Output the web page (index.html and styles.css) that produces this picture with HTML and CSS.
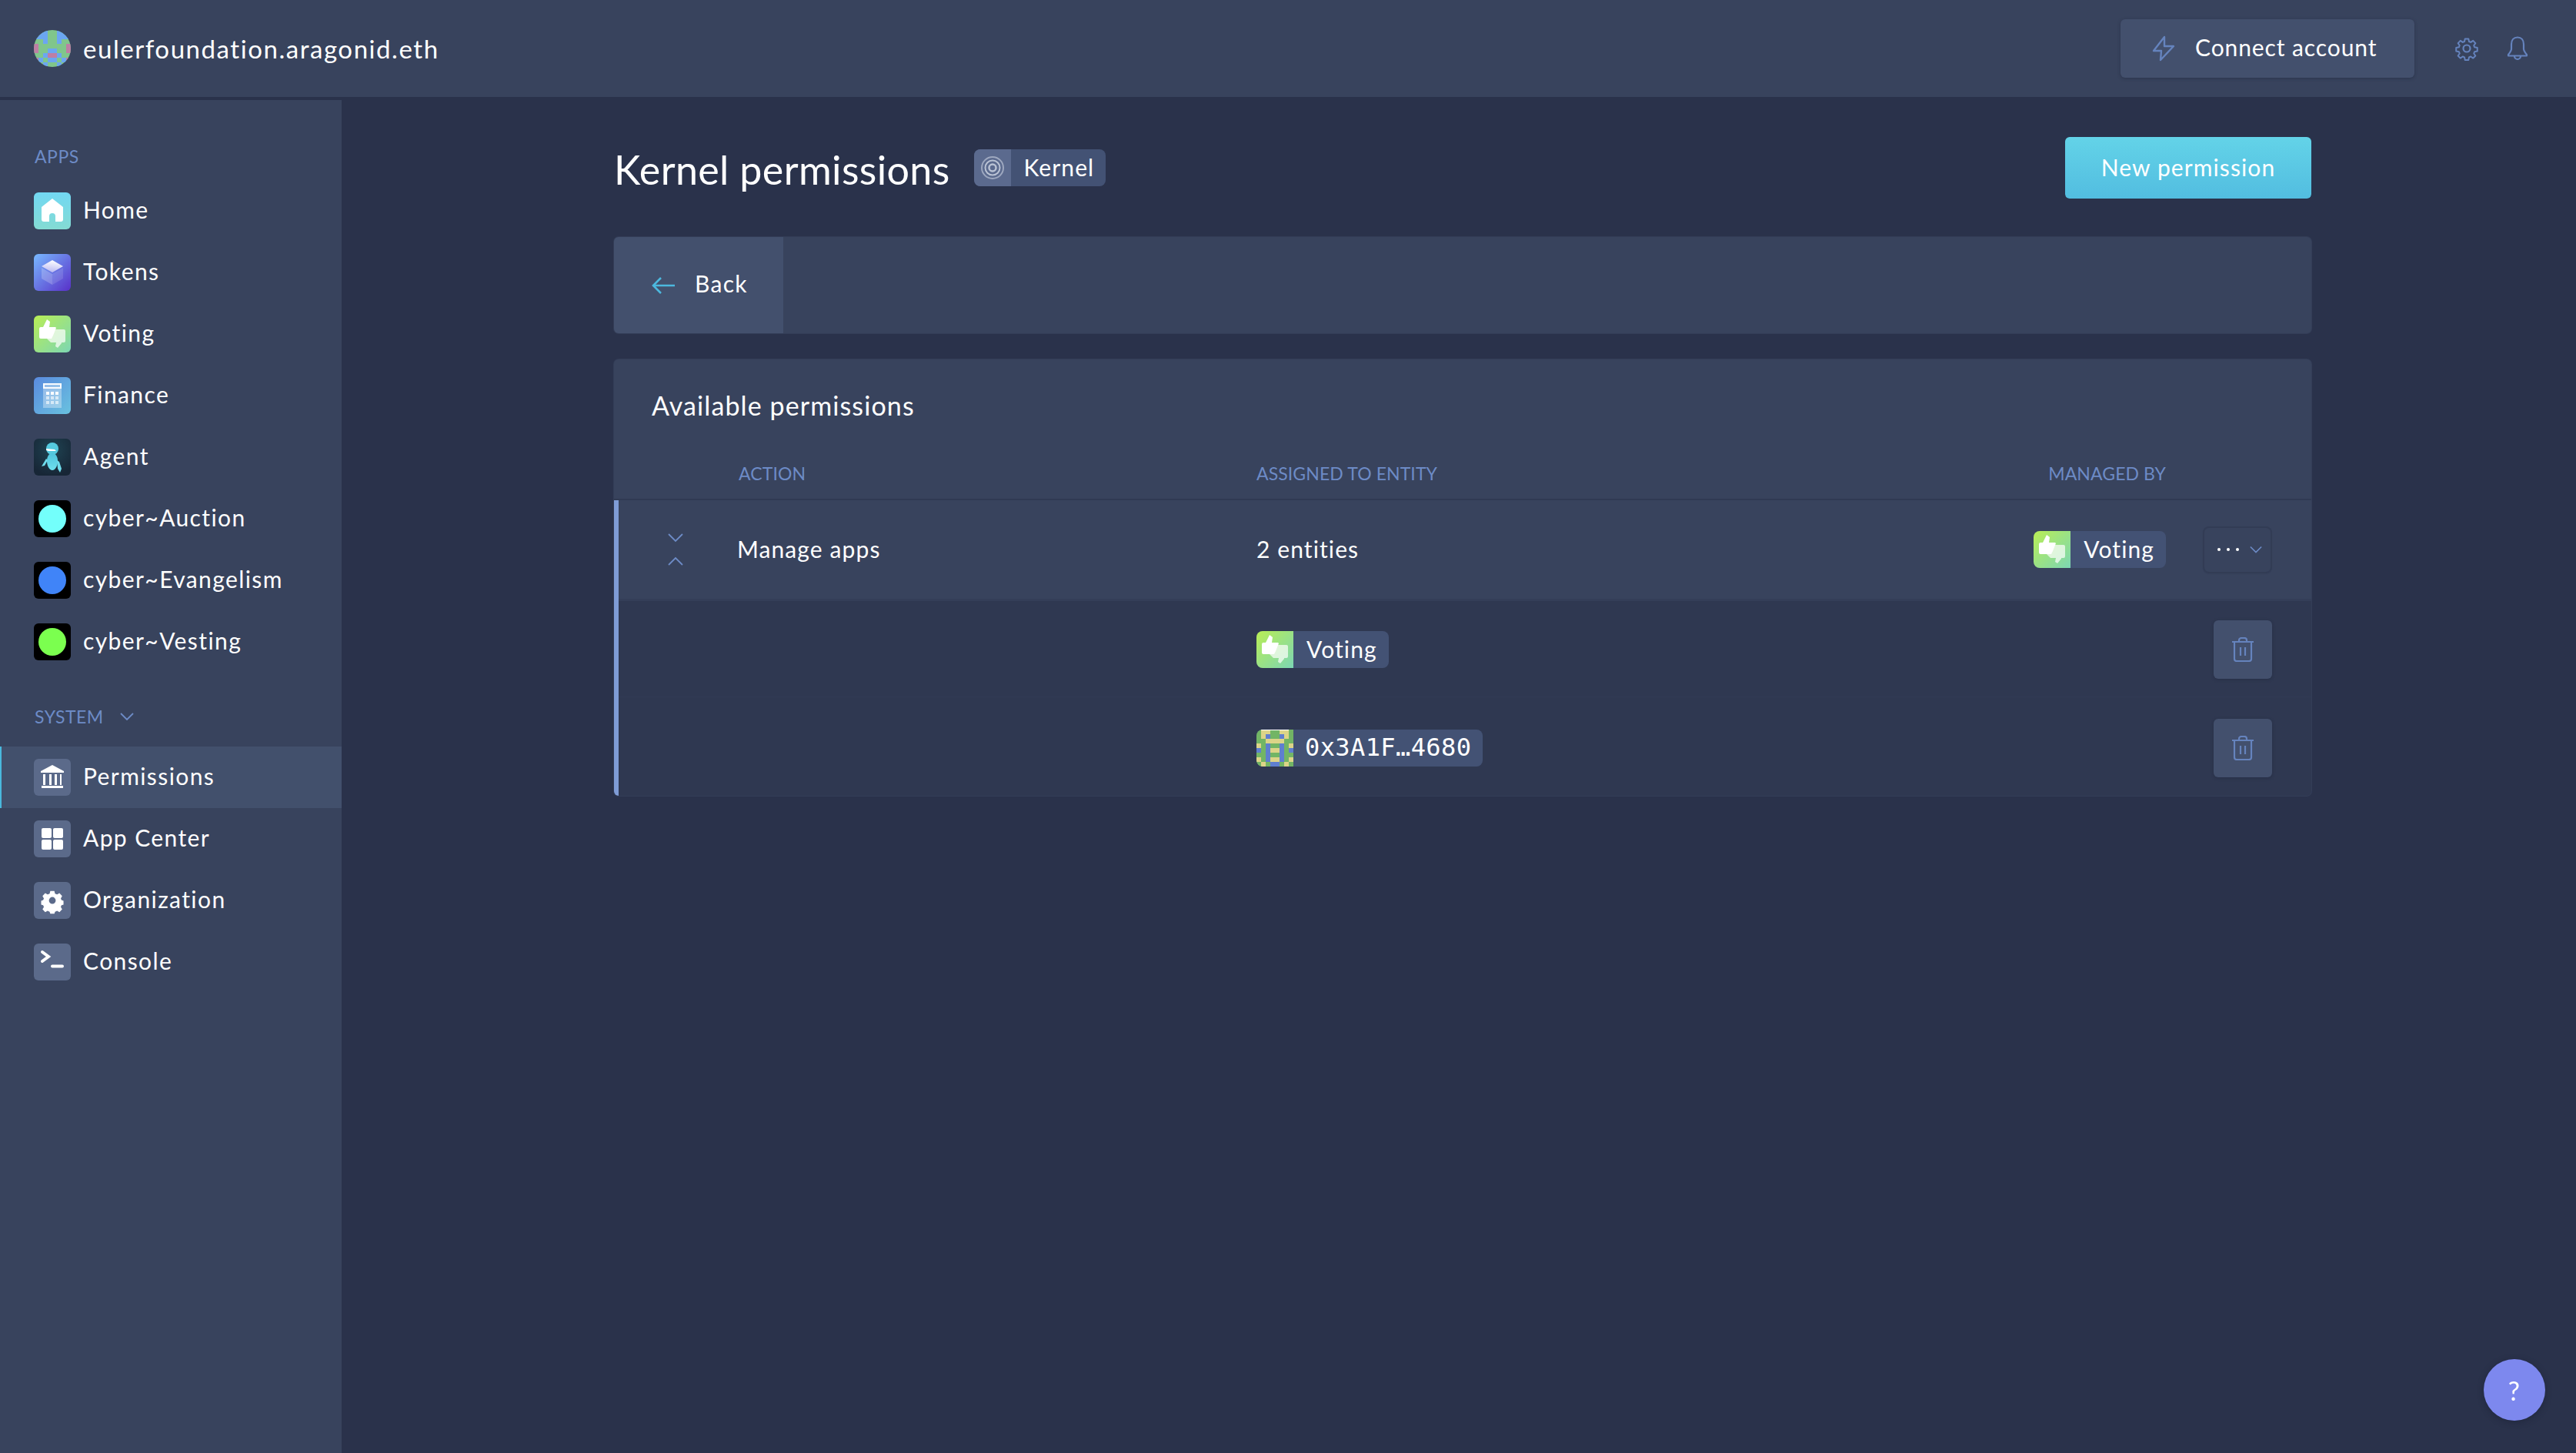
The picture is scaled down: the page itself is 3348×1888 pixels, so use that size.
FILE: index.html
```html
<!DOCTYPE html>
<html lang="en">
<head>
<meta charset="utf-8">
<title>Kernel permissions</title>
<link rel="stylesheet" href="styles.css">
</head>
<body>
<svg class="defs" width="0" height="0" aria-hidden="true">
  <defs>
    <linearGradient id="gHome" x1="0" y1="0" x2="0" y2="1"><stop offset="0" stop-color="#72d8f3"/><stop offset="1" stop-color="#84dbd3"/></linearGradient>
    <linearGradient id="gTok" x1="0" y1="0" x2="1" y2="1"><stop offset="0" stop-color="#78b9ff"/><stop offset="1" stop-color="#5830c8"/></linearGradient>
    <linearGradient id="gCube" x1="0.6" y1="0" x2="0.4" y2="1"><stop offset="0" stop-color="#fff"/><stop offset="1" stop-color="#b9b8f2"/></linearGradient>
    <linearGradient id="gVote" x1="0" y1="0" x2="1" y2="1"><stop offset="0" stop-color="#b9ee55"/><stop offset="1" stop-color="#7cd6b4"/></linearGradient>
    <linearGradient id="gFin" x1="0" y1="0" x2="1" y2="1"><stop offset="0" stop-color="#5a8ade"/><stop offset="1" stop-color="#69c2df"/></linearGradient>
    <radialGradient id="gAgent" cx="0.5" cy="0.3" r="0.7"><stop offset="0" stop-color="#1f4352"/><stop offset="1" stop-color="#172636"/></radialGradient>
    <linearGradient id="gBot" x1="0" y1="0" x2="0" y2="1"><stop offset="0" stop-color="#4fc3dc"/><stop offset="1" stop-color="#6fe0ee"/></linearGradient>
    <symbol id="voting" viewBox="0 0 48 48">
      <rect width="48" height="48" fill="url(#gVote)"/>
      <path fill="#fff" fill-opacity=".7" d="M22 18h17a2 2 0 0 1 2 2v13a2 2 0 0 1-2 2h-3v1l-5 6-3-2 1-5h-7l-5-5z"/>
      <path fill="#fff" d="M17 5l4 3-1 7h8l1 1-4 10-2 4H9a2 2 0 0 1-2-2V17a2 2 0 0 1 2-2h3z"/>
    </symbol>
  </defs>
</svg>

<header class="topbar">
  <div class="org">
    <svg class="org-logo" viewBox="0 0 8 8" shape-rendering="crispEdges">
      <rect width="8" height="8" fill="#80c68b"/>
      <path fill="#6ba6f1" d="M0 0h3v2H0zM5 0h3v2H5zM2 2h1v1H2zM5 2h1v1H5zM3 4h2v1H3zM2 5h1v1H2zM5 5h1v1H5zM3 6h2v1H3zM1 6h1v1H1zM6 6h1v1H6zM2 7h1v1H2zM5 7h1v1H5z"/>
      <path fill="#bd7fa4" d="M0 3h1v2H0zM7 3h1v2H7zM3 5h2v1H3zM0 6h1v1H0zM7 6h1v1H7z"/>
    </svg>
    <span class="org-name">eulerfoundation.aragonid.eth</span>
  </div>
  <div class="top-actions">
    <button class="connect">
      <svg class="connect-icon" viewBox="0 0 30 34" fill="none" stroke="#6583bd" stroke-width="2.4" stroke-linejoin="round"><path d="M16 2 2 20h10l-1 12L28 14H16z"/></svg>
      <span>Connect account</span>
    </button>
    <svg class="top-icon gear-icon" viewBox="0 0 32 32" fill="none" stroke="#6583bd" stroke-width="2.2" stroke-linejoin="round"><circle cx="16" cy="16" r="4.5"/><path d="M13.5 2h5l.8 4 2.5 1 3.4-2.3 3.4 3.6-2.3 3.3 1 2.5 4 .8v5l-4 .8-1 2.5 2.3 3.4-3.4 3.4-3.4-2.3-2.5 1-.8 4h-5l-.8-4-2.5-1-3.4 2.3-3.4-3.4 2.3-3.4-1-2.5-4-.8v-5l4-.8 1-2.5-2.3-3.3 3.4-3.6 3.4 2.3 2.5-1z" transform="translate(1.6 1.6) scale(.9)"/></svg>
    <svg class="top-icon bell-icon" viewBox="0 0 28 32" fill="none" stroke="#6583bd" stroke-width="2.2" stroke-linejoin="round"><path d="M14 1.5c-5 0-8 3.600-8 9v6c0 2.500-1.500 4.500-4 7.500v1.500h24V24c-2.500-3-4-5-4-7.500v-6c0-5.400-3-9-8-9z"/><path d="M10 26a4 4 0 0 0 8 0"/></svg>
  </div>
</header>

<div class="body">
  <nav class="sidebar">
    <div class="nav-label">APPS</div>
    <a class="nav-item">
      <svg class="nav-icon" viewBox="0 0 48 48"><rect width="48" height="48" rx="6" fill="url(#gHome)"/><path fill="#fff" d="M24 8l14 11v16a3 3 0 0 1-3 3h-7v-7a4 4 0 0 0-8 0v7h-7a3 3 0 0 1-3-3V19z"/></svg>
      <span>Home</span>
    </a>
    <a class="nav-item">
      <svg class="nav-icon" viewBox="0 0 48 48"><rect width="48" height="48" rx="6" fill="url(#gTok)"/><path fill="#fff" fill-opacity=".22" d="M10 18l14 8v14l-14-8z"/><path fill="#fff" fill-opacity=".12" d="M38 18l-14 8v14l14-8z"/><path fill="url(#gCube)" d="M24 8l14 8-14 8-14-8z"/></svg>
      <span>Tokens</span>
    </a>
    <a class="nav-item">
      <svg class="nav-icon nav-clip" viewBox="0 0 48 48"><use href="#voting"/></svg>
      <span>Voting</span>
    </a>
    <a class="nav-item">
      <svg class="nav-icon" viewBox="0 0 48 48"><rect width="48" height="48" rx="6" fill="url(#gFin)"/><rect x="12" y="8" width="24" height="32" fill="#fff" fill-opacity=".35"/><path fill="#fff" d="M12 8h24v7H12zM14 10v3h20v-3zM16 19h4v4h-4zM22 19h4v4h-4zM28 19h4v4h-4z" fill-rule="evenodd" fill-opacity=".95"/><path fill="#fff" fill-opacity=".6" d="M16 25h4v4h-4zM22 25h4v4h-4zM28 25h4v4h-4zM16 31h4v4h-4zM22 31h4v4h-4zM28 31h4v4h-4z"/></svg>
      <span>Finance</span>
    </a>
    <a class="nav-item">
      <svg class="nav-icon" viewBox="0 0 48 48"><rect width="48" height="48" rx="6" fill="url(#gAgent)"/><circle cx="24" cy="13" r="8" fill="#55c9de"/><path fill="#fff" d="M16 13l11 1 2 2-10 0-3-1z"/><path fill="url(#gBot)" d="M24 19c5 0 7 5 7 10 0 6-3 12-7 12s-7-6-7-12c0-5 2-10 7-10z"/><path fill="#6fdcec" d="M16 26l2 2-4 7-4 1zM30 28l3 2 3 9-2 5-3-5z"/></svg>
      <span>Agent</span>
    </a>
    <a class="nav-item">
      <svg class="nav-icon" viewBox="0 0 48 48"><rect width="48" height="48" rx="6" fill="#000"/><circle cx="24" cy="24" r="18" fill="#73fffb"/></svg>
      <span>cyber~Auction</span>
    </a>
    <a class="nav-item">
      <svg class="nav-icon" viewBox="0 0 48 48"><rect width="48" height="48" rx="6" fill="#000"/><circle cx="24" cy="24" r="18" fill="#4084f8"/></svg>
      <span>cyber~Evangelism</span>
    </a>
    <a class="nav-item">
      <svg class="nav-icon" viewBox="0 0 48 48"><rect width="48" height="48" rx="6" fill="#000"/><circle cx="24" cy="24" r="18" fill="#7bff4f"/></svg>
      <span>cyber~Vesting</span>
    </a>

    <div class="nav-label nav-label-system">
      SYSTEM
      <svg class="nav-chevron" viewBox="0 0 18 10" fill="none" stroke="#6d8bc6" stroke-width="1.800"><path d="M1 1l8 8 8-8"/></svg>
    </div>
    <a class="nav-item is-active">
      <svg class="nav-icon" viewBox="0 0 48 48"><rect width="48" height="48" rx="6" fill="#5b6a8a"/><path fill="#fff" d="M24 8l15 8v2H9v-2zM12 20h3v14h-3zM20 20h3v14h-3zM27 20h3v14h-3zM34 20h2v14h-2zM10 35h28v3H10z"/></svg>
      <span>Permissions</span>
    </a>
    <a class="nav-item">
      <svg class="nav-icon" viewBox="0 0 48 48"><rect width="48" height="48" rx="6" fill="#5b6a8a"/><rect x="10" y="10" width="13" height="13" rx="2" fill="#fff"/><rect x="25" y="10" width="13" height="13" rx="2" fill="#fff"/><rect x="10" y="25" width="13" height="13" rx="2" fill="#fff"/><rect x="25" y="25" width="13" height="13" rx="2" fill="#fff"/></svg>
      <span>App Center</span>
    </a>
    <a class="nav-item">
      <svg class="nav-icon" viewBox="0 0 48 48"><rect width="48" height="48" rx="6" fill="#5b6a8a"/><path fill="#fff" fill-rule="evenodd" d="M21 10h6l1 4 3 1.300 3.500-2 4 4.200-2 3.500 1 2.500 3 1v5.600l-3 1-1 2.500 2 3.500-4 4.200-3.500-2-3 1.300-1 3h-6l-1-3-3-1.300-3.500 2-4-4.200 2-3.500-1-2.500-3-1v-5.600l3-1 1-2.500-2-3.500 4-4.200 3.500 2 3-1.300zM24 19a5 5 0 1 0 0 10 5 5 0 0 0 0-10z" transform="translate(2.900 2.900) scale(.88)"/></svg>
      <span>Organization</span>
    </a>
    <a class="nav-item">
      <svg class="nav-icon" viewBox="0 0 48 48"><rect width="48" height="48" rx="6" fill="#5b6a8a"/><path fill="none" stroke="#fff" stroke-width="4" stroke-linecap="round" d="M11 11l8 6-8 6"/><path fill="none" stroke="#fff" stroke-width="4" stroke-linecap="round" d="M24 29.500h13"/></svg>
      <span>Console</span>
    </a>
  </nav>

  <main class="main">
    <div class="page-head">
      <div class="page-title">
        <h1>Kernel permissions</h1>
        <span class="tag">
          <svg class="tag-icon" viewBox="0 0 48 48"><rect width="48" height="48" fill="#5b6a8e"/><g fill="none" stroke="#b9c2d4"><circle cx="24" cy="24" r="14" stroke-width="2" stroke-opacity=".7"/><circle cx="24" cy="24" r="9.500" stroke-width="2"/><circle cx="24" cy="24" r="4.500" stroke-width="2.500"/></g></svg>
          <span class="tag-text">Kernel</span>
        </span>
      </div>
      <button class="primary"><span>New permission</span></button>
    </div>

    <div class="backbar">
      <button class="back">
        <svg class="back-arrow" viewBox="0 0 30 24" fill="none" stroke="#4cb8de" stroke-width="2.600"><path d="M12 2 2 12l10 10M2 12h28"/></svg>
        <span>Back</span>
      </button>
    </div>

    <section class="card">
      <h2 class="card-title">Available permissions</h2>
      <div class="grid th">
        <span></span>
        <span>ACTION</span>
        <span>ASSIGNED TO ENTITY</span>
        <span class="end">MANAGED BY</span>
        <span></span>
      </div>
      <div class="rows">
        <div class="grid row">
          <svg class="toggle" viewBox="0 0 20 42" fill="none" stroke="#6d8bc6" stroke-width="1.800"><path d="M1 1l9 9 9-9M1 41l9-9 9 9"/></svg>
          <span class="cell">Manage apps</span>
          <span class="cell">2 entities</span>
          <span class="end">
            <span class="tag">
              <svg class="tag-icon" viewBox="0 0 48 48"><use href="#voting"/></svg>
              <span class="tag-text">Voting</span>
            </span>
          </span>
          <span class="end">
            <button class="more">
              <svg class="more-dots" viewBox="0 0 28 4" fill="#fff"><circle cx="2" cy="2" r="2"/><circle cx="14" cy="2" r="2"/><circle cx="26" cy="2" r="2"/></svg>
              <svg class="more-chev" viewBox="0 0 18 10" fill="none" stroke="#6d8bc6" stroke-width="1.800"><path d="M1 1l8 8 8-8"/></svg>
            </button>
          </span>
        </div>
        <div class="grid sub sub-first">
          <span></span>
          <span></span>
          <span>
            <span class="tag">
              <svg class="tag-icon" viewBox="0 0 48 48"><use href="#voting"/></svg>
              <span class="tag-text">Voting</span>
            </span>
          </span>
          <span></span>
          <span class="end">
            <button class="trash"><svg class="trash-icon" viewBox="0 0 28 32" fill="none" stroke="#6583bd" stroke-width="2.200"><path d="M0 6h28M9 6V4a3 3 0 0 1 3-3h4a3 3 0 0 1 3 3v2M3 6v22a3 3 0 0 0 3 3h16a3 3 0 0 0 3-3V6M11 13v11M17 13v11"/></svg></button>
          </span>
        </div>
        <div class="grid sub">
          <span></span>
          <span></span>
          <span>
            <span class="tag">
              <svg class="tag-icon" viewBox="0 0 8 8" shape-rendering="crispEdges">
                <rect width="8" height="8" fill="#72b565"/>
                <path fill="#dcd488" d="M1 0h2v1H1zM5 0h2v1H5zM1 1h1v1H1zM6 1h1v1H6zM2 2h4v1H2zM0 3h1v1H0zM7 3h1v1H7zM3 4h2v1H3zM0 6h1v1H0zM7 6h1v1H7zM3 6h2v1H3zM1 7h1v1H1zM6 7h1v1H6z"/>
                <path fill="#5f7fcf" d="M2 1h1v1H2zM5 1h1v1H5zM2 3h1v3H2zM5 3h1v3H5zM0 4h1v1H0zM7 4h1v1H7zM2 6h1v1H2zM5 6h1v1H5zM3 7h2v1H3z"/>
                <rect x="1" width="6" height=".17" fill="#fff"/>
              </svg>
              <span class="tag-text mono">0x3A1F…4680</span>
            </span>
          </span>
          <span></span>
          <span class="end">
            <button class="trash"><svg class="trash-icon" viewBox="0 0 28 32" fill="none" stroke="#6583bd" stroke-width="2.200"><path d="M0 6h28M9 6V4a3 3 0 0 1 3-3h4a3 3 0 0 1 3 3v2M3 6v22a3 3 0 0 0 3 3h16a3 3 0 0 0 3-3V6M11 13v11M17 13v11"/></svg></button>
          </span>
        </div>
      </div>
    </section>
  </main>
</div>

<button class="help">?</button>
</body>
</html>
```
FILE: styles.css
```css
* { box-sizing: border-box; }
html, body { margin: 0; height: 100%; }
body {
  width: 3348px;
  height: 1888px;
  overflow: hidden;
  background: #2a324b;
  color: #fff;
  font-family: "Lato", "Noto Sans", sans-serif;
  font-size: 30px;
  letter-spacing: 1.1px;
}
button { font: inherit; letter-spacing: inherit; color: inherit; border: 0; padding: 0; cursor: pointer; }
h1, h2 { margin: 0; font-weight: 400; }
.defs { position: absolute; }

.topbar {
  height: 126px;
  background: #38435d;
  display: flex;
  align-items: center;
  justify-content: space-between;
  padding: 0 62px 0 44px;
}
.org { display: flex; align-items: center; gap: 16px; }
.org-logo { width: 48px; height: 48px; border-radius: 50%; }
.org-name { font-size: 33px; letter-spacing: 1.55px; }
.top-actions { display: flex; align-items: center; }
.connect {
  width: 382px;
  height: 76px;
  background: #43506d;
  border-radius: 6px;
  box-shadow: 0 1px 4px rgba(20, 25, 45, .35);
  display: flex;
  align-items: center;
  padding-left: 41px;
  gap: 26px;
  margin-right: 52px;
}
.connect span { padding-bottom: 4px; letter-spacing: .9px; }
.connect-icon { width: 30px; height: 34px; }
.top-icon { height: 32px; }
.gear-icon { width: 32px; margin-right: 36px; }
.bell-icon { width: 28px; }

.body { display: flex; margin-top: 4px; height: 1758px; }
.sidebar { width: 444px; background: #38435d; padding-top: 56px; }
.nav-label {
  height: 34px;
  line-height: 34px;
  margin: 0 0 14px 45px;
  font-size: 23px;
  letter-spacing: .5px;
  color: #6d8bc6;
}
.nav-label-system { margin-top: 40px; margin-bottom: 22px; display: flex; align-items: center; }
.nav-chevron { width: 18px; height: 10px; margin-left: 21px; }
.nav-item {
  height: 80px;
  display: flex;
  align-items: center;
  gap: 16px;
  padding-left: 44px;
  white-space: nowrap;
  letter-spacing: 1.4px;
}
.nav-item span { padding-bottom: 4px; }
.nav-item.is-active { background: #42506c; border-left: 2px solid #4ab8dd; padding-left: 42px; }
.nav-icon { width: 48px; height: 48px; flex: none; }
.nav-clip { border-radius: 6px; }

.main { flex: 1; padding: 48px 344px 0 354px; }
.page-head { display: flex; justify-content: space-between; align-items: center; height: 80px; }
.page-title { display: flex; align-items: center; gap: 31px; }
h1 { font-size: 52px; line-height: 80px; letter-spacing: .35px; position: relative; top: 2px; }
.tag {
  display: inline-flex;
  align-items: center;
  height: 48px;
  background: #435274;
  border-radius: 8px;
  overflow: hidden;
  vertical-align: top;
}
.tag-icon { width: 48px; height: 48px; flex: none; }
.tag-text { padding: 0 15px 3px 17px; white-space: nowrap; }
.mono { font-family: "DejaVu Sans Mono", monospace; font-size: 32px; letter-spacing: .4px; padding: 0 15px 2px 15px; }
.primary {
  width: 320px;
  height: 80px;
  border-radius: 6px;
  background: linear-gradient(#63d3e8, #52bde0);
}
.primary span { display: block; padding-bottom: 3px; }

.backbar {
  margin-top: 50px;
  height: 125px;
  background: #38435d;
  border-radius: 6px;
  box-shadow: 0 0 0 1px #333d57;
  overflow: hidden;
}
.back {
  width: 222px;
  height: 100%;
  background: #43506d;
  border-right: 2px solid #38435d;
  display: flex;
  align-items: center;
  padding-left: 49px;
  gap: 26px;
}
.back span { padding-bottom: 5px; letter-spacing: 1.3px; }
.back-arrow { width: 30px; height: 24px; }

.card {
  margin-top: 34px;
  background: #38435d;
  border-radius: 6px;
  overflow: hidden;
  box-shadow: 0 0 0 1px #333d57;
}
.card-title { height: 120px; line-height: 120px; padding-left: 49px; font-size: 34px; letter-spacing: 1.1px; }
.grid {
  display: grid;
  grid-template-columns: 162px 673px 1fr 1fr 189px;
  align-items: center;
}
.th {
  height: 63px;
  padding-bottom: 6px;
  border-bottom: 2px solid #303a53;
  font-size: 23px;
  letter-spacing: .1px;
  color: #6d8bc6;
}
.end { display: flex; justify-content: flex-end; }
.th .end { display: block; text-align: right; }
.rows { border-left: 6px solid #7f9cd6; }
.grid.row, .grid.sub { grid-template-columns: 154px 675px 1fr 1fr 189px; }
.row { height: 131px; border-bottom: 3px solid #343e58; }
.cell { padding-bottom: 3px; }
.toggle { width: 20px; height: 42px; justify-self: start; margin-left: 64px; }
.sub {
  background: #2f3851;
  height: 128px;
  padding-top: 28px;
  align-items: start;
  padding-bottom: 24px;
}
.sub > span:nth-child(3) { padding-top: 14px; }
.sub-first { height: 125px; padding-top: 25px; border-bottom: 1px solid #313a54; }
.more {
  width: 86px;
  height: 57px;
  margin-right: 53px;
  background: #38435d;
  border-radius: 6px;
  box-shadow: 0 0 0 2px #323c55, 0 1px 3px rgba(20, 25, 45, .3);
  display: flex;
  align-items: center;
  padding-left: 17px;
  gap: 14px;
}
.more-dots { width: 28px; height: 4px; }
.more-chev { width: 16px; height: 10px; }
.trash {
  width: 76px;
  height: 76px;
  margin-right: 51px;
  background: #43506d;
  border-radius: 6px;
  display: flex;
  align-items: center;
  justify-content: center;
  box-shadow: 0 1px 4px rgba(20, 25, 45, .3);
}
.trash-icon { width: 28px; height: 32px; }

.help {
  position: fixed;
  left: 3228px;
  top: 1766px;
  width: 80px;
  height: 80px;
  border-radius: 50%;
  background: #7d88ee;
  font-size: 34px;
  box-shadow: 0 2px 8px rgba(20, 25, 45, .4);
}
```
